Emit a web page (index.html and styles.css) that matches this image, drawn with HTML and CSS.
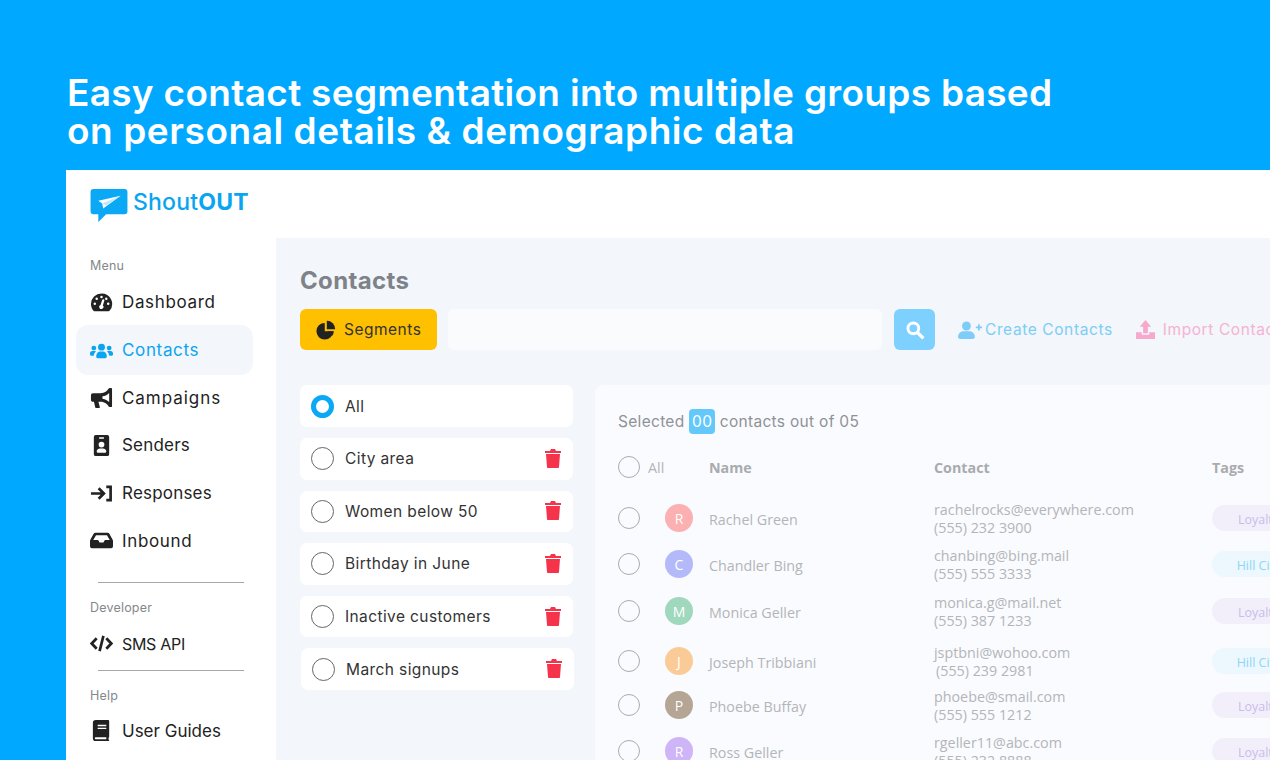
FILE: index.html
```html
<!DOCTYPE html>
<html lang="en">
<head>
<meta charset="utf-8">
<title>ShoutOUT Contacts</title>
<link rel="stylesheet" href="styles.css">
</head>
<body>
<header class="hero">
  <h1>Easy contact segmentation into multiple groups based<br><span class="line-two">on personal details &amp; demographic data</span></h1>
</header>
<div class="app">
  <div class="topbar">
    <svg class="logo-mark" viewBox="0 0 38 34"><path fill="#0aa8f5" d="M3 0h32a3 3 0 0 1 3 3v20a3 3 0 0 1-3 3H16l-8 8v-8H3a3 3 0 0 1-3-3V3a3 3 0 0 1 3-3z"/><path fill="#fff" d="M8 12 31 7 13 20l-1-5z"/><path fill="#bfe8fd" d="M12 15 31 7 16 17z"/></svg>
    <span class="logo-text">Shout<b>OUT</b></span>
  </div>
  <div class="layout">
    <aside class="sidebar">
      <div class="side-label first">Menu</div>
      <nav class="side-nav">
        <a class="side-item"><svg class="side-ic" viewBox="0 0 24 24"><path fill="#222" fill-rule="evenodd" d="M12 2.500a11 11 0 0 0-11 11c0 2.600.9 5 2.400 6.900.3.400.8.600 1.300.600h14.600c.5 0 1-.2 1.300-.6A11 11 0 0 0 12 2.500zM12 5a1.300 1.300 0 1 1 0 2.600A1.300 1.300 0 0 1 12 5zM5 14.500a1.300 1.300 0 1 1 0-2.600 1.300 1.300 0 0 1 0 2.600zM7 9.500a1.300 1.300 0 1 1 0-2.600 1.300 1.300 0 0 1 0 2.600zm8 .4-1.600 5.100a2.200 2.200 0 1 1-2.400-.5l1.700-5.200a1.200 1.200 0 0 1 2.300.6zm2-.4a1.300 1.300 0 1 1 0-2.600 1.300 1.300 0 0 1 0 2.600zm2 5a1.300 1.300 0 1 1 0-2.600 1.300 1.300 0 0 1 0 2.600z"/></svg>Dashboard</a>
        <a class="side-item active"><svg class="side-ic" viewBox="0 0 24 24"><g fill="#0aa5f0"><circle cx="12" cy="8.500" r="3.600"/><circle cx="4" cy="9.500" r="2.500"/><circle cx="20" cy="9.500" r="2.500"/><path d="M6.500 18c0-3 2-5 4-5h3c2 0 4 2 4 5v.5c0 .8-.7 1.500-1.500 1.500H8c-.8 0-1.500-.7-1.500-1.500z"/><path d="M0 15c0-1.500 1-2.500 2.500-2.500H5c.6 0 1 .2 1.400.5-1.500 1-2.400 2.700-2.500 4.500H1.300C.5 17.500 0 17 0 16.300zM24 15c0-1.500-1-2.500-2.500-2.500H19c-.6 0-1 .2-1.400.5 1.500 1 2.400 2.700 2.500 4.500h2.600c.8 0 1.300-.5 1.300-1.200z"/></g></svg>Contacts</a>
        <a class="side-item wide"><svg class="side-ic" viewBox="0 0 24 24"><path fill="#222" fill-rule="evenodd" d="M22 2h-1.500c-.5 0-.8.300-1 .6C18 5 15.500 7.500 11 7.500H3a2 2 0 0 0-2 2v5c0 1.100.9 2 2 2h1.100l1.400 6c.1.300.3.500.6.500h3.600c.4 0 .7-.4.600-.8L8.800 16.500H11c4.500 0 7 2.500 8.500 4.900.2.300.5.600 1 .6H22c.6 0 1-.4 1-1V3c0-.6-.4-1-1-1zm-2 14.800c-1.800-1.900-4-3.200-7-3.600v-2.400c3-.4 5.200-1.700 7-3.600z"/></svg>Campaigns</a>
        <a class="side-item snug"><svg class="side-ic" viewBox="0 0 24 24"><path fill="#222" fill-rule="evenodd" d="M6 1h12a2 2 0 0 1 2 2v18a2 2 0 0 1-2 2H6a2 2 0 0 1-2-2V3a2 2 0 0 1 2-2zm3.500 2.500v1.500h5V3.500zM12 8a3 3 0 1 0 0 6 3 3 0 0 0 0-6zm-5 10.200c0 .7.500 1.300 1.200 1.300h7.600c.7 0 1.200-.6 1.200-1.300 0-1.800-1.500-3.200-3.500-3.200h-3c-2 0-3.500 1.400-3.500 3.200z"/></svg>Senders</a>
        <a class="side-item snug"><svg class="side-ic" viewBox="0 0 24 24"><path fill="none" stroke="#222" stroke-width="2.800" d="M1 12h12M9 6.500l5.500 5.500L9 17.500M17 5h4.500v14H17"/></svg>Responses</a>
        <a class="side-item"><svg class="side-ic" viewBox="0 0 24 24"><path fill="#222" fill-rule="evenodd" d="M5.500 4h13c.7 0 1.300.3 1.700.9L23.500 11c.3.400.5.900.5 1.400V18a2 2 0 0 1-2 2H2a2 2 0 0 1-2-2v-5.600c0-.5.200-1 .5-1.400L3.800 4.900C4.200 4.300 4.800 4 5.500 4zm.8 2.500L3.400 11.500h5.100l1.500 2.500h4l1.500-2.500h5.100l-2.900-5z"/></svg>Inbound</a>
      </nav>
      <hr class="side-rule">
      <div class="side-label">Developer</div>
      <a class="side-item compact"><svg class="side-ic" viewBox="0 0 24 24"><path fill="none" stroke="#222" stroke-width="2.800" d="M7 6.500 1.800 12 7 17.500M17 6.500 22.200 12 17 17.500M14 4l-4 16"/></svg>SMS API</a>
      <hr class="side-rule tight">
      <div class="side-label">Help</div>
      <a class="side-item plain"><svg class="side-ic" viewBox="0 0 24 24"><path fill="#222" fill-rule="evenodd" d="M6 1h13c.6 0 1 .4 1 1v16.500c0 .4-.2.700-.5.800-.2.800-.2 1.600 0 2.400.3.200.5.500.5.800v.5H6a3 3 0 0 1-3-3V4a3 3 0 0 1 3-3zm2 5v1.500h9V6zm0 3v1.500h9V9zm-2 10a1 1 0 0 0 0 2h11v-2z"/></svg>User Guides</a>
    </aside>
    <main class="main">
      <h2 class="page-title">Contacts</h2>
      <div class="toolbar">
        <button class="btn-seg"><svg class="seg-ic" viewBox="0 0 24 24"><path fill="#222" d="M10.500 3.500a10 10 0 1 0 10 10h-10z"/><path fill="#222" d="M13 1v10h10A10 10 0 0 0 13 1z"/><path fill="#222" d="m14 13.500 7.500 0a10 10 0 0 1-2.500 6z"/></svg>Segments</button>
        <div class="search-field"></div>
        <button class="btn-search"><svg class="search-ic" viewBox="0 0 24 24"><circle cx="10" cy="10" r="6.500" fill="none" stroke="#fff" stroke-width="3.500"/><path d="m15 15 7 7" stroke="#fff" stroke-width="4"/></svg></button>
        <a class="tool-link create"><svg class="tool-ic" viewBox="0 0 27 20"><g fill="#7dcdf8"><circle cx="9.500" cy="5.500" r="5"/><path d="M0 18c0-4 3-6.500 6-6.500h7c3 0 6 2.500 6 6.500 0 1-.8 2-2 2H2c-1.200 0-2-1-2-2z"/><path d="M20 6h2.500V3.500h2V6H27v2h-2.500v2.500h-2V8H20z"/></g></svg>Create Contacts</a>
        <a class="tool-link import"><svg class="tool-ic narrow" viewBox="0 0 20 20"><g fill="#f6a8cd"><path d="M10 0 16 7H12.500V14h-5V7H4z"/><path d="M0 13h6v2.500h8V13h6v7H0z"/></g></svg>Import Contacts</a>
      </div>
      <div class="content">
        <ul class="segments">
          <li class="seg-item"><span class="radio on"></span>All</li>
          <li class="seg-item"><span class="radio"></span>City area<svg class="trash" viewBox="0 0 18 20"><path fill="#f5334a" d="M1 3h5l1-2h4l1 2h5v2H1zM2 6h14l-1 13c0 .6-.5 1-1 1H4c-.5 0-1-.4-1-1z"/></svg></li>
          <li class="seg-item"><span class="radio"></span>Women below 50<svg class="trash" viewBox="0 0 18 20"><path fill="#f5334a" d="M1 3h5l1-2h4l1 2h5v2H1zM2 6h14l-1 13c0 .6-.5 1-1 1H4c-.5 0-1-.4-1-1z"/></svg></li>
          <li class="seg-item"><span class="radio"></span>Birthday in June<svg class="trash" viewBox="0 0 18 20"><path fill="#f5334a" d="M1 3h5l1-2h4l1 2h5v2H1zM2 6h14l-1 13c0 .6-.5 1-1 1H4c-.5 0-1-.4-1-1z"/></svg></li>
          <li class="seg-item"><span class="radio"></span>Inactive customers<svg class="trash" viewBox="0 0 18 20"><path fill="#f5334a" d="M1 3h5l1-2h4l1 2h5v2H1zM2 6h14l-1 13c0 .6-.5 1-1 1H4c-.5 0-1-.4-1-1z"/></svg></li>
          <li class="seg-item nudged"><span class="radio"></span>March signups<svg class="trash" viewBox="0 0 18 20"><path fill="#f5334a" d="M1 3h5l1-2h4l1 2h5v2H1zM2 6h14l-1 13c0 .6-.5 1-1 1H4c-.5 0-1-.4-1-1z"/></svg></li>
        </ul>
        <section class="panel">
          <p class="selected">Selected <span class="count">00</span> contacts out of 05</p>
          <div class="row head">
            <span class="check"></span><span class="all">All</span><span>Name</span><span>Contact</span><span>Tags</span>
          </div>
          <div class="row gap6"><span class="check"></span><span class="avatar a-r">R</span><span class="name">Rachel Green</span><span class="contact">rachelrocks@everywhere.com<br>(555) 232 3900</span><span class="tag loyal">Loyalty</span></div>
          <div class="row gap2"><span class="check"></span><span class="avatar a-c">C</span><span class="name">Chandler Bing</span><span class="contact">chanbing@bing.mail<br>(555) 555 3333</span><span class="tag city">Hill City</span></div>
          <div class="row gap3"><span class="check"></span><span class="avatar a-m">M</span><span class="name">Monica Geller</span><span class="contact">monica.g@mail.net<br>(555) 387 1233</span><span class="tag loyal">Loyalty</span></div>
          <div class="row gap6"><span class="check"></span><span class="avatar a-j">J</span><span class="name">Joseph Tribbiani</span><span class="contact">jsptbni@wohoo.com<br><span class="indent">(555) 239 2981</span></span><span class="tag city">Hill City</span></div>
          <div class="row"><span class="check"></span><span class="avatar a-p">P</span><span class="name">Phoebe Buffay</span><span class="contact">phoebe@smail.com<br>(555) 555 1212</span><span class="tag loyal">Loyalty</span></div>
          <div class="row gap2"><span class="check"></span><span class="avatar a-g">R</span><span class="name">Ross Geller</span><span class="contact">rgeller11@abc.com<br>(555) 232 8888</span><span class="tag loyal">Loyalty</span></div>
        </section>
      </div>
    </main>
  </div>
</div>
</body>
</html>
```
FILE: styles.css
```css
* { box-sizing: border-box; }
html, body { margin: 0; height: 760px; overflow: hidden; }
body { background: #00a8ff; font-family: Inter, "Liberation Sans", sans-serif; color: #222; }

.hero { height: 170px; padding: 74px 0 0 67px; }
.hero h1 { margin: 0; color: #fff; font-size: 37px; line-height: 38px; font-weight: 600; letter-spacing: 0.3px; white-space: nowrap; }
.line-two { letter-spacing: 0.56px; }

.app { margin-left: 66px; height: 590px; background: #fff; display: flex; flex-direction: column; }
.topbar { height: 68px; flex: none; display: flex; align-items: flex-start; padding: 19px 0 0 24px; gap: 5px; }
.logo-mark { width: 38px; height: 33px; }
.logo-text { font-size: 23px; line-height: 26px; font-weight: 500; letter-spacing: 0.2px; color: #0aa5f0; }
.logo-text b { font-weight: 700; }

.layout { flex: 1; display: flex; min-height: 0; }
.sidebar { width: 210px; flex: none; padding: 20px 23px 0 10px; }
.side-label { font-size: 12.500px; line-height: 16px; color: #84888c; padding-left: 14px; margin: 17px 0 3.500px; letter-spacing: 0.2px; }
.side-label.first { margin-top: 0; }
.side-nav { display: flex; flex-direction: column; margin-top: 4.500px; }
.side-item { display: flex; align-items: center; height: 47.600px; padding-left: 14px; font-size: 17px; color: #222; border-radius: 12px; letter-spacing: 0.65px; }
.side-item.active { background: #f3f6fb; color: #0aa5f0; height: 50px; margin: -1px 0; }
.side-item.wide { letter-spacing: 0.95px; }
.side-item.snug { letter-spacing: 0.2px; }
.side-item.plain { letter-spacing: 0; }
.side-item.compact { font-size: 16px; letter-spacing: -0.3px; }
.side-ic { width: 23px; height: 23px; margin-right: 9px; flex: none; }
.side-rule { border: 0; border-top: 1px solid #a8a8a8; margin: 18px 0 0 22px; width: 146px; }
.side-rule.tight { margin-top: 2px; }

.main { flex: 1; min-width: 0; background: #f3f6fb; padding: 28px 0 0 24px; overflow: hidden; }
.page-title { margin: 0; font-size: 24px; line-height: 30px; font-weight: 700; color: #7d8388; letter-spacing: 0.35px; }
.toolbar { display: flex; align-items: center; margin-top: 13px; height: 41px; white-space: nowrap; }
.toolbar > * { flex: none; }
.btn-seg { width: 137px; height: 41px; border: 0; border-radius: 6px; background: #ffc000; display: flex; align-items: center; padding: 0 0 0 16px; font: inherit; font-size: 15.500px; letter-spacing: 0.5px; color: #333; }
.seg-ic { width: 20px; height: 20px; margin-right: 8px; }
.search-field { width: 434px; height: 41px; margin-left: 11px; background: #f9fbfd; border-radius: 6px; }
.btn-search { width: 41px; height: 41px; margin-left: 12px; border: 0; padding: 0; border-radius: 6px; background: #7ed0ff; display: flex; align-items: center; justify-content: center; }
.search-ic { width: 20px; height: 20px; }
.tool-link { display: flex; align-items: center; font-size: 15.500px; letter-spacing: 0.6px; }
.tool-link.create { margin-left: 23px; color: #7dcdf5; }
.tool-link.import { margin-left: 23px; color: #f6b2d4; }
.tool-ic { width: 24px; height: 18px; margin-right: 3px; }
.tool-ic.narrow { width: 19px; height: 19px; margin-right: 8px; }

.content { display: flex; align-items: flex-start; margin-top: 35px; }
.segments { list-style: none; margin: 0; padding: 0.400px 0 0; width: 273px; flex: none; display: flex; flex-direction: column; gap: 11px; }
.seg-item { height: 41.600px; background: #fff; border-radius: 7px; display: flex; align-items: center; padding: 0 11px; font-size: 15.500px; letter-spacing: 0.4px; color: #333; }
.seg-item.nudged { margin: 0 -1px 0 1px; }
.radio { width: 23px; height: 23px; border: 1px solid #666; border-radius: 50%; margin-right: 11px; flex: none; }
.radio.on { border: 5.500px solid #0aa8f5; }
.trash { width: 18px; height: 20px; margin: 0 0 2px auto; }

.panel { margin-left: 22px; width: 700px; height: 380px; background: #fafbfe; border-radius: 8px 0 0 0; padding: 24px 0 0 23px; font-family: "Open Sans", "Noto Sans", sans-serif; color: #b3b5b9; }
.selected { margin: 0; height: 24px; display: flex; align-items: center; font-family: Inter, "Liberation Sans", sans-serif; font-size: 15.500px; letter-spacing: 0.3px; color: #8f9296; white-space: pre; }
.count { width: 26px; height: 25px; border-radius: 4px; background: #64c8fb; color: #fff; display: flex; align-items: center; justify-content: center; margin: 0; }
.row { display: grid; grid-template-columns: 47px 44px 225px 278px 1fr; align-items: center; height: 44px; font-size: 14.300px; white-space: nowrap; }
.row.head { grid-template-columns: 30px 61px 225px 278px 1fr; height: 46px; margin-top: 11px; font-weight: 700; color: #a9abaf; }
.row.head .all { font-weight: 400; color: #b3b5b9; }
.gap2 { margin-top: 2px; } .gap3 { margin-top: 3px; } .gap6 { margin-top: 6px; }
.check { width: 22px; height: 22px; border: 1px solid #a9abaf; border-radius: 50%; display: block; }
.avatar { width: 28px; height: 28px; border-radius: 50%; color: #fff; display: flex; align-items: center; justify-content: center; font-size: 14px; }
.a-r { background: #fbb0b2; } .a-c { background: #b4baf9; } .a-m { background: #9fd8bd; }
.a-j { background: #fbcb97; } .a-p { background: #b5a594; } .a-g { background: #cdb5f7; }
.name, .contact { padding-top: 2px; }
.contact { line-height: 18px; }
.indent { padding-left: 2px; }
.tag { width: 93px; height: 26px; border-radius: 13px; display: flex; align-items: center; justify-content: center; padding-top: 2px; font-size: 12.500px; }
.tag.loyal { background: #f2effb; color: #cabcea; }
.tag.city { background: #ecf7fe; color: #8fd6f5; }
```
